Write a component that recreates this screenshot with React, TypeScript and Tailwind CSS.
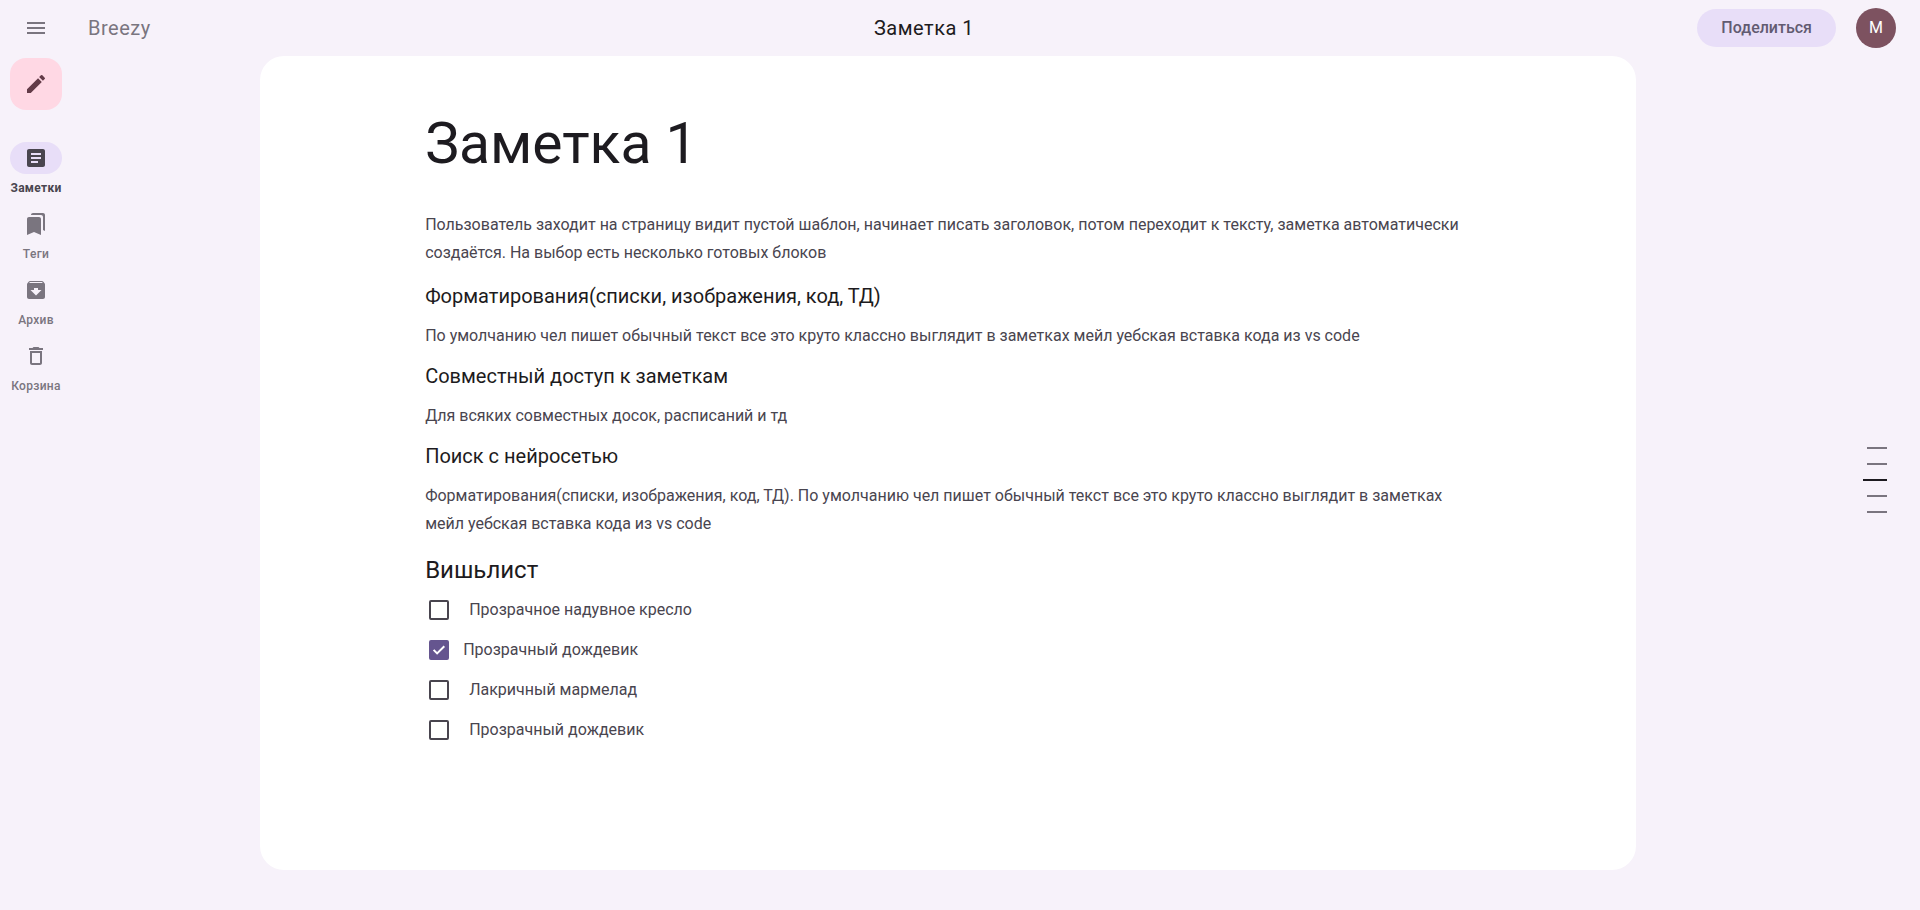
import { useState } from "react";
import type { IconType } from "react-icons";
import {
  MdArchive,
  MdArticle,
  MdBookmarks,
  MdDeleteOutline,
  MdEdit,
  MdMenu,
} from "react-icons/md";

type NavItem = { label: string; icon: IconType; active?: boolean };
type Section = { title: string; text: string };
type Wish = { id: string; label: string; done: boolean };

const navItems: NavItem[] = [
  { label: "Заметки", icon: MdArticle, active: true },
  { label: "Теги", icon: MdBookmarks },
  { label: "Архив", icon: MdArchive },
  { label: "Корзина", icon: MdDeleteOutline },
];

const sections: Section[] = [
  {
    title: "Форматирования(списки, изображения, код, ТД)",
    text: "По умолчанию чел пишет обычный текст все это круто классно выглядит в заметках мейл уебская вставка кода из vs code",
  },
  {
    title: "Совместный доступ к заметкам",
    text: "Для всяких совместных досок, расписаний и тд",
  },
  {
    title: "Поиск с нейросетью",
    text: "Форматирования(списки, изображения, код, ТД). По умолчанию чел пишет обычный текст все это круто классно выглядит в заметках мейл уебская вставка кода из vs code",
  },
];

const initialWishes: Wish[] = [
  { id: "wish-1", label: "Прозрачное надувное кресло", done: false },
  { id: "wish-2", label: "Прозрачный дождевик", done: true },
  { id: "wish-3", label: "Лакричный мармелад", done: false },
  { id: "wish-4", label: "Прозрачный дождевик", done: false },
];

const outline = ["Заметка 1", ...sections.map((s) => s.title), "Вишьлист"];

function Header() {
  return (
    <header className="flex h-14 shrink-0 items-center justify-between px-6">
      <div className="flex items-center gap-10">
        <button type="button" aria-label="Меню" className="text-[#7a757f]">
          <MdMenu className="size-6" />
        </button>
        <a href="#" className="text-xl tracking-wide text-[#7a757f]">
          Breezy
        </a>
      </div>
      <span className="text-xl tracking-wide text-[#1d1b20]">Заметка 1</span>
      <div className="flex items-center gap-5">
        <button
          type="button"
          className="h-[38px] rounded-full bg-[#e8def8] px-6 text-base font-medium text-[#625b71]"
        >
          Поделиться
        </button>
        <button
          type="button"
          aria-label="Профиль"
          className="size-10 rounded-full bg-[#7d5260] text-base text-white"
        >
          M
        </button>
      </div>
    </header>
  );
}

function Sidebar() {
  return (
    <aside className="w-[260px] shrink-0 pt-0.5">
      <div className="flex w-[72px] flex-col items-center">
        <button
          type="button"
          aria-label="Новая заметка"
          className="flex size-[52px] items-center justify-center rounded-2xl bg-[#ffd8e4] text-[#633b48]"
        >
          <MdEdit className="size-6" />
        </button>
        <nav className="mt-8 flex flex-col items-center gap-3">
          {navItems.map(({ label, icon: Icon, active }) => (
            <a
              key={label}
              href="#"
              aria-current={active ? "page" : undefined}
              className={
                active
                  ? "flex flex-col items-center gap-1.5 text-[#49454f]"
                  : "flex flex-col items-center gap-1.5 text-[#7a757f]"
              }
            >
              <span
                className={
                  active
                    ? "flex h-8 w-[52px] items-center justify-center rounded-full bg-[#e8def8]"
                    : "flex h-8 w-[52px] items-center justify-center"
                }
              >
                <Icon className="size-6" />
              </span>
              <span
                className={
                  active
                    ? "text-xs font-bold tracking-wide"
                    : "text-xs font-medium tracking-wide"
                }
              >
                {label}
              </span>
            </a>
          ))}
        </nav>
      </div>
    </aside>
  );
}

function WishItem({ wish, onToggle }: { wish: Wish; onToggle: () => void }) {
  return (
    <li className="flex h-10 items-center pl-1">
      <span className="relative size-5">
        <input
          id={wish.id}
          type="checkbox"
          checked={wish.done}
          onChange={onToggle}
          className="block size-5 appearance-none rounded-xs border-2 border-[#49454f] checked:border-[#65558f] checked:bg-[#65558f]"
        />
        {wish.done && (
          <svg
            viewBox="0 0 20 20"
            aria-hidden="true"
            className="pointer-events-none absolute inset-0 size-5"
          >
            <path
              d="M4.6 9.9l3.5 3.5 7.2-7.2"
              fill="none"
              stroke="#fff"
              strokeWidth="2"
            />
          </svg>
        )}
      </span>
      <label
        htmlFor={wish.id}
        className={wish.done ? "pl-[14px]" : "pl-5"}
      >
        {wish.label}
      </label>
    </li>
  );
}

function Note() {
  const [wishes, setWishes] = useState(initialWishes);
  const toggle = (id: string) =>
    setWishes((list) =>
      list.map((w) => (w.id === id ? { ...w, done: !w.done } : w)),
    );

  return (
    <main className="mb-10 min-w-0 flex-1 rounded-3xl bg-white pt-14 pb-16 text-base leading-7 text-[#49454f]">
      <article className="mx-auto w-[76%]">
        <h1 className="text-[57px] leading-[64px] text-[#1d1b20]">Заметка 1</h1>
        <p className="mt-[35px]">
          Пользователь заходит на страницу видит пустой шаблон, начинает писать
          заголовок, потом переходит к тексту, заметка автоматически создаётся.
          На выбор есть несколько готовых блоков
        </p>
        <div className="mt-[15px] flex flex-col gap-3">
          {sections.map((section) => (
            <section key={section.title}>
              <h2 className="text-xl leading-7 text-[#1d1b20]">
                {section.title}
              </h2>
              <p className="mt-3">{section.text}</p>
            </section>
          ))}
        </div>
        <section className="mt-4">
          <h2 className="text-2xl leading-8 text-[#1d1b20]">Вишьлист</h2>
          <ul className="mt-1">
            {wishes.map((wish) => (
              <WishItem
                key={wish.id}
                wish={wish}
                onToggle={() => toggle(wish.id)}
              />
            ))}
          </ul>
        </section>
      </article>
    </main>
  );
}

function Outline() {
  return (
    <nav
      aria-label="Содержание"
      className="flex w-[284px] shrink-0 flex-col items-end justify-center gap-[14px] pr-[33px] pb-1.5"
    >
      {outline.map((title, i) => (
        <a
          key={title}
          href="#"
          aria-label={title}
          className={
            i === 2 ? "h-0.5 w-6 bg-[#1d1b20]" : "h-0.5 w-5 bg-[#7a757f]"
          }
        />
      ))}
    </nav>
  );
}

export default function App() {
  return (
    <div className="flex min-h-screen flex-col bg-[#f7f2fa] font-[Roboto,sans-serif]">
      <Header />
      <div className="flex flex-1">
        <Sidebar />
        <Note />
        <Outline />
      </div>
    </div>
  );
}
